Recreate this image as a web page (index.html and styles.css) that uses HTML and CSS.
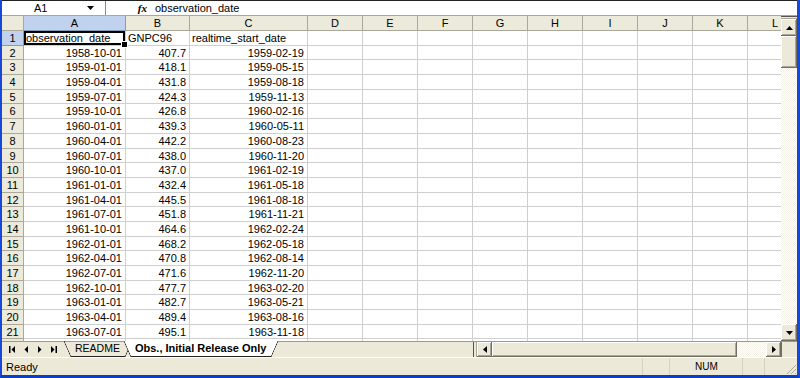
FILE: index.html
```html
<!DOCTYPE html>
<html lang="en">
<head>
  <meta charset="UTF-8" />
  <title>GNPC96 - Obs., Initial Release Only</title>
  <link rel="stylesheet" href="styles.css">
</head>
<body>
<div class="window">
  <div class="formula-bar">
    <div class="name-box">
      <span class="name">A1</span>
      <svg class="drop" width="7" height="4" viewBox="0 0 7 4"><path d="M0 0h7L3.5 4z" fill="#000"/></svg>
    </div>
    <div class="fx">fx</div>
    <div class="formula">observation_date</div>
  </div>

  <div class="sheet">
    <div class="grid" id="grid"></div>
    <div class="vscroll">
      <div class="split"></div>
      <div class="sb-btn"><svg width="7" height="4" viewBox="0 0 7 4"><path d="M3.5 0L7 4H0z" fill="#000"/></svg></div>
      <div class="sb-thumb"></div>
      <div class="sb-track"></div>
      <div class="sb-btn"><svg width="7" height="4" viewBox="0 0 7 4"><path d="M0 0h7L3.5 4z" fill="#000"/></svg></div>
    </div>
  </div>

  <div class="tabbar">
    <div class="tab-nav">
      <svg width="6" height="7" viewBox="0 0 6 7"><path d="M0 0h1.5v7H0zM6 0v7L2.5 3.5z" fill="#000"/></svg>
      <svg width="4" height="7" viewBox="0 0 4 7"><path d="M4 0v7L0.5 3.5z" fill="#000"/></svg>
      <svg width="4" height="7" viewBox="0 0 4 7"><path d="M0 0v7l3.5-3.5z" fill="#000"/></svg>
      <svg width="6" height="7" viewBox="0 0 6 7"><path d="M0 0v7l3.5-3.5zM4.5 0H6v7H4.5z" fill="#000"/></svg>
    </div>
    <div class="tabs">
      <div class="tab">README</div>
      <div class="tab active">Obs., Initial Release Only</div>
    </div>
    <div class="tab-space"></div>
    <div class="hscroll">
      <div class="hsplit"></div>
      <div class="sb-btn h"><svg width="4" height="7" viewBox="0 0 4 7"><path d="M4 0v7L0 3.5z" fill="#000"/></svg></div>
      <div class="sb-thumb h"></div>
      <div class="sb-track h"></div>
      <div class="sb-btn h"><svg width="4" height="7" viewBox="0 0 4 7"><path d="M0 0v7l4-3.5z" fill="#000"/></svg></div>
    </div>
    <div class="corner"></div>
  </div>

  <div class="statusbar">
    <div class="ready">Ready</div>
    <div class="panel p1"></div>
    <div class="panel p2">NUM</div>
    <div class="panel p3"></div>
    <div class="panel p4"></div>
    <div class="grip">
      <svg width="12" height="12" viewBox="0 0 12 12"><path d="M11 2L2 11M11 6L6 11M11 10L10 11" stroke="#aca899" stroke-width="1"/></svg>
    </div>
  </div>
</div>

<script>
const cols = ['A','B','C','D','E','F','G','H','I','J','K','L'];
const datos = [
  ['observation_date', 'GNPC96', 'realtime_start_date'],
  ['1958-10-01', '407.7', '1959-02-19'],
  ['1959-01-01', '418.1', '1959-05-15'],
  ['1959-04-01', '431.8', '1959-08-18'],
  ['1959-07-01', '424.3', '1959-11-13'],
  ['1959-10-01', '426.8', '1960-02-16'],
  ['1960-01-01', '439.3', '1960-05-11'],
  ['1960-04-01', '442.2', '1960-08-23'],
  ['1960-07-01', '438.0', '1960-11-20'],
  ['1960-10-01', '437.0', '1961-02-19'],
  ['1961-01-01', '432.4', '1961-05-18'],
  ['1961-04-01', '445.5', '1961-08-18'],
  ['1961-07-01', '451.8', '1961-11-21'],
  ['1961-10-01', '464.6', '1962-02-24'],
  ['1962-01-01', '468.2', '1962-05-18'],
  ['1962-04-01', '470.8', '1962-08-14'],
  ['1962-07-01', '471.6', '1962-11-20'],
  ['1962-10-01', '477.7', '1963-02-20'],
  ['1963-01-01', '482.7', '1963-05-21'],
  ['1963-04-01', '489.4', '1963-08-16'],
  ['1963-07-01', '495.1', '1963-11-18'],
  ['1963-10-01', '501.5', '1964-02-17']
];

let html = '<div class="corner-cell"></div>';
cols.forEach((c, i) => {
  html += `<div class="ch${i === 0 ? ' active' : ''}">${c}</div>`;
});
datos.forEach((fila, r) => {
  html += `<div class="rh${r === 0 ? ' active' : ''}">${r + 1}</div>`;
  cols.forEach((c, i) => {
    const v = fila[i] || '';
    let cls = 'cell';
    if (r > 0 && v) cls += ' num';
    if (r === 0 && i === 0) cls += ' sel';
    html += `<div class="${cls}">${v}</div>`;
  });
});
document.getElementById('grid').innerHTML = html;
</script>
</body>
</html>
```

FILE: styles.css
```css
* {
  box-sizing: border-box;
}
body {
  margin: 0;
  width: 800px;
  height: 378px;
  overflow: hidden;
  font-family: "Liberation Sans", Arial, sans-serif;
  font-size: 11px;
  color: #000;
  background: #ece9d8;
}
.window {
  height: 378px;
  display: flex;
  flex-direction: column;
  border-left: 2px solid #1848d8;
  border-right: 3px solid #1848d8;
  border-bottom: 3px solid #0a3ec8;
}

/* formula bar */
.formula-bar {
  height: 16px;
  display: flex;
  align-items: center;
  background: #fff;
  border-top: 1px solid #222;
  border-bottom: 1px solid #aca899;
}
.name-box {
  width: 104px;
  height: 100%;
  display: flex;
  align-items: center;
  border-right: 1px solid #8a8a8a;
}
.name-box .name {
  flex: 1;
  padding-left: 32px;
}
.name-box .drop {
  margin-right: 11px;
}
.fx {
  width: 46px;
  text-align: right;
  padding-right: 5px;
  font-family: "Liberation Serif", serif;
  font-style: italic;
  font-weight: bold;
  font-size: 11px;
}
.formula {
  padding-left: 3px;
}

/* sheet */
.sheet {
  height: 325px;
  display: flex;
  background: #fff;
}
.grid {
  flex: 1;
  overflow: hidden;
  display: grid;
  grid-template-columns: 22px 102px 64px 118px repeat(9, 55px);
  grid-template-rows: 15px;
  grid-auto-rows: 14.7px;
  align-content: start;
}
.corner-cell, .ch, .rh {
  background: #ebeadb;
  border-right: 1px solid #aca899;
  border-bottom: 1px solid #aca899;
  text-align: center;
  line-height: 14px;
}
.ch.active, .rh.active {
  background: #c1d2ee;
  border-right-color: #7f9db9;
  border-bottom-color: #7f9db9;
}
.cell {
  border-right: 1px solid #cfcfcf;
  border-bottom: 1px solid #cfcfcf;
  padding: 0 3px 0 2px;
  line-height: 14px;
  white-space: nowrap;
  overflow: hidden;
}
.cell.num {
  text-align: right;
}
.cell.sel {
  position: relative;
  overflow: visible;
  box-shadow: inset 0 0 0 2px #000;
}
.cell.sel::after {
  content: "";
  position: absolute;
  right: -3px;
  bottom: -3px;
  width: 5px;
  height: 5px;
  background: #000;
  border: 1px solid #fff;
}

/* scrollbars */
.vscroll {
  width: 16px;
  display: flex;
  flex-direction: column;
  background: repeating-conic-gradient(#f3f1e8 0 25%, #fff 0 50%) 0 0 / 2px 2px;
}
.split {
  height: 3px;
  background: #ece9d8;
  border-top: 1px solid #555;
  border-bottom: 1px solid #aca899;
}
.sb-btn {
  height: 17px;
  display: flex;
  align-items: center;
  justify-content: center;
  background: #ece9d8;
  box-shadow: inset -1px -1px #716f64, inset 1px 1px #fff, inset -2px -2px #aca899;
}
.sb-thumb {
  height: 32px;
  background: #ece9d8;
  box-shadow: inset -1px -1px #716f64, inset 1px 1px #fff, inset -2px -2px #aca899;
}
.sb-track {
  flex: 1;
}
.sb-btn.h {
  height: 100%;
  width: 15px;
}
.sb-thumb.h {
  height: 100%;
  width: 245px;
}

/* sheet tabs */
.tabbar {
  height: 16px;
  display: flex;
  background: #ece9d8;
  border-top: 1px solid #9d9a8a;
}
.tab-nav {
  width: 62px;
  display: flex;
  align-items: center;
  justify-content: space-around;
  padding: 0 2px;
}
.tabs {
  display: flex;
  height: 16px;
  margin-top: -1px;
}
.tab {
  height: 16px;
  line-height: 15px;
  padding: 0 12px 0 11px;
  font-size: 10.5px;
  background:
    linear-gradient(#222, #222) center bottom / calc(100% - 14px) 1px no-repeat,
    linear-gradient(to top right, transparent calc(50% - .6px), #222 50%, transparent calc(50% + .6px)) left top / 7px 100% no-repeat,
    linear-gradient(to top left, transparent calc(50% - .6px), #222 50%, transparent calc(50% + .6px)) right top / 7px 100% no-repeat;
}
.tab.active {
  margin-left: -8px;
  padding: 0 12px 0 11px;
  font-weight: bold;
  font-size: 11px;
  background:
    linear-gradient(#222, #222) center bottom / calc(100% - 14px) 1px no-repeat,
    linear-gradient(to top right, transparent calc(50% - .6px), #222 50%, #fff calc(50% + .6px)) left top / 7px 100% no-repeat,
    linear-gradient(to top left, transparent calc(50% - .6px), #222 50%, #fff calc(50% + .6px)) right top / 7px 100% no-repeat,
    linear-gradient(#fff, #fff) center / calc(100% - 14px) 100% no-repeat;
}
.tab-space {
  flex: 1;
}
.hscroll {
  width: 308px;
  display: flex;
  background: repeating-conic-gradient(#f3f1e8 0 25%, #fff 0 50%) 0 0 / 2px 2px;
}
.hsplit {
  width: 4px;
  background: #ece9d8;
  border-left: 1px solid #555;
  border-right: 1px solid #aca899;
}
.corner {
  width: 16px;
  background: #ece9d8;
  border-left: 1px solid #716f64;
}

/* status bar */
.statusbar {
  height: 18px;
  display: flex;
  align-items: center;
  background: #ece9d8;
  border-top: 1px solid #fff;
}
.ready {
  flex: 1;
  padding-left: 4px;
}
.panel {
  height: 100%;
  line-height: 17px;
  border-left: 1px solid #d6d2c2;
  font-size: 10px;
}
.p1 {
  width: 27px;
}
.p2 {
  width: 73px;
  padding-left: 25px;
}
.p3 {
  width: 22px;
}
.p4 {
  width: 18px;
}
.grip {
  width: 15px;
  height: 100%;
  display: flex;
  align-items: flex-end;
  justify-content: flex-end;
}
```
